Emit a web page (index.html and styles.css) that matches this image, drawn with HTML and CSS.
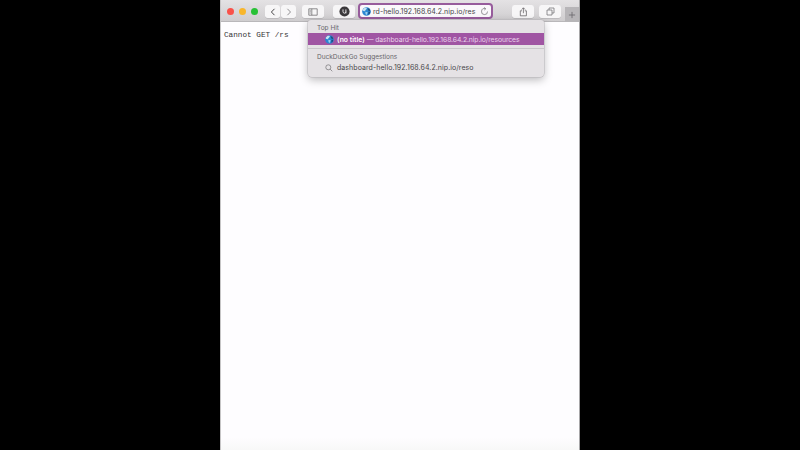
FILE: index.html
```html
<!DOCTYPE html>
<html lang="en">
<head>
<meta charset="utf-8">
<title>Browser</title>
<link rel="stylesheet" href="styles.css">
</head>
<body>
<svg class="defs" aria-hidden="true">
  <symbol id="globe" viewBox="0 0 10 10">
    <circle cx="5" cy="5" r="4.8" fill="#2b86d2"/>
    <path d="M1.2 2.4 3 .8 5 .8 5.4 2 4 3.2 3.2 4.6 1.6 4.4 .7 3.7Z" fill="#c5e3ef"/>
    <path d="M3.7 5.2 6.3 5.7 5.7 7.7 4.7 9.1 3.9 7.2Z" fill="#9bd3ee"/>
    <path d="M6.2 1.2 8.3 2.2 9.2 4.1 7.8 4.4 6.6 3.2Z" fill="#204f78"/>
    <path d="M7.2 5.3 9.3 5.2 8.4 7.7 7 8.5Z" fill="#194b80"/>
  </symbol>
</svg>
<main class="window">
  <header class="toolbar">
    <div class="lights"><i class="red"></i><i class="yellow"></i><i class="green"></i></div>
    <div class="nav">
      <button class="btn" aria-label="Back"><svg width="8" height="10" viewBox="0 0 8 10"><path d="M5.5 1.8 2.4 5l3.1 3.2" stroke="#484648" stroke-width="1"/></svg></button>
      <button class="btn" aria-label="Forward"><svg width="8" height="10" viewBox="0 0 8 10"><path d="M2.4 1.8 5.5 5 2.4 8.2" stroke="#858386" stroke-width=".9"/></svg></button>
    </div>
    <button class="btn sidebar" aria-label="Sidebar"><svg width="10" height="8" viewBox="0 0 10 8"><path d="M.8.8h8.4v6.4H.8zM3.8.8v6.4M1.7 2.3h1M1.7 3.7h1M1.7 5.1h1" stroke="#626063" stroke-width=".7"/></svg></button>
    <button class="btn shield" aria-label="Extension"><svg width="11" height="11" viewBox="0 0 11 11"><circle cx="5.5" cy="5.5" r="5.1" fill="#3b393b"/><path d="M4 3.4v2.3c0 2 2.9 2 2.9 0V3.4M6.9 5.6v1.8" stroke="#e4e2e4" stroke-width="1"/></svg></button>
    <div class="address">
      <svg class="globe"><use href="#globe"/></svg>
      <span class="url">rd-hello.192.168.64.2.nip.io/res</span>
      <svg class="reload" viewBox="0 0 9 9"><path d="M5.3 1.7A3 3 0 1 0 7.5 4.5M4.2.4l1.6 1.4-1.5 1.3" stroke="#777579" stroke-width=".75"/></svg>
    </div>
    <button class="btn share" aria-label="Share"><svg width="9" height="10" viewBox="0 0 9 10"><path d="M3 3.8H1.3v5h6.1v-5H5.8M4.4 6.2V.9M2.7 2.5 4.4.8l1.7 1.7" stroke="#615f62" stroke-width=".75"/></svg></button>
    <button class="btn tabs" aria-label="Tabs"><svg width="9" height="9" viewBox="0 0 9 9"><path d="M3 3V1h5v5H6M1 3h5v5H1z" stroke="#727073" stroke-width=".75"/></svg></button>
    <button class="new-tab" aria-label="New tab"><svg width="8" height="8" viewBox="0 0 8 8"><path d="M4 .9v6.2M.9 4h6.2" stroke="#68666a" stroke-width=".8"/></svg></button>
  </header>
  <pre class="response">Cannot GET /rs</pre>
  <section class="suggestions">
    <h2>Top Hit</h2>
    <div class="row selected">
      <svg class="globe"><use href="#globe"/></svg>
      <span class="hit"><b>(no title)</b> — dashboard-hello.192.168.64.2.nip.io/resources</span>
    </div>
    <hr>
    <h2>DuckDuckGo Suggestions</h2>
    <div class="row">
      <svg class="search" viewBox="0 0 8 8"><circle cx="3.3" cy="3.3" r="2.5" stroke="#737174" stroke-width=".7"/><path d="m5.1 5.1 2.2 2.2" stroke="#737174" stroke-width=".7"/></svg>
      <span class="query">dashboard-hello.192.168.64.2.nip.io/reso</span>
    </div>
  </section>
</main>
</body>
</html>
```

FILE: styles.css
```css
* { box-sizing: border-box; }
body { margin: 0; height: 450px; overflow: hidden; background: #000; font-family: Inter, "Liberation Sans", sans-serif; }
svg { display: block; flex: none; fill: none; }
.defs { position: absolute; width: 0; height: 0; }
.window { position: relative; width: 360px; height: 450px; margin: 0 auto; background: linear-gradient(#fefdff 437px, #f8f8f8); border-left: 1px solid #c6c5c6; border-right: 1px solid #a7a6a8; }
.toolbar { display: flex; align-items: flex-start; height: 22px; padding: 5px 0 0 6px; background: linear-gradient(#e4e2e4, #cfcdcf); border-bottom: 1px solid #b9b7ba; }
.lights { display: flex; gap: 5px; padding-top: 3px; margin-right: 7px; }
.lights i { width: 7px; height: 7px; border-radius: 50%; }
.red { background: #f95149; }
.yellow { background: #f8b62b; }
.green { background: #27c135; }
.nav { display: flex; gap: 1px; margin-right: 6px; }
button { border: 0; padding: 0; display: flex; align-items: center; justify-content: center; flex: none; }
.btn { width: 22px; height: 13px; border-radius: 2.5px; background: #f7f6f7; box-shadow: 0 .5px .5px #aaa8ab; }
.nav .btn { width: 15px; }
.shield { margin: 0 3px 0 9px; }
.address { display: flex; align-items: center; width: 135px; height: 16px; margin-top: -2px; padding: 0 2px; border: 2px solid #975c9c; border-radius: 4px; background: #faf8fb; }
.globe { width: 9px; height: 9px; }
.url { width: 103px; margin-left: 2px; white-space: nowrap; color: #464447; font-size: 7px; line-height: 11px; letter-spacing: .04px; }
.reload { width: 9px; height: 9px; margin-left: 4px; }
.share { margin-left: 19px; }
.tabs { margin-left: 5px; }
.new-tab { width: 14px; height: 15px; margin: 2px 0 0 auto; background: #b7b5b8; }
.response { margin: 8px 0 0 3px; color: #363436; font: 7.7px/10px "Liberation Mono", monospace; }
.suggestions { position: absolute; left: 87px; top: 20px; width: 236px; height: 57px; padding-top: 4px; border-radius: 3px 3px 4px 4px; background: #e5e2e5; box-shadow: 0 0 0 .5px #b8b5b9, 0 3px 8px #0004; }
h2 { margin: 0 0 0 9px; color: #68666a; font-weight: 400; font-size: 6.5px; line-height: 9px; white-space: nowrap; }
.row { display: flex; align-items: center; height: 12px; padding-left: 17px; white-space: nowrap; font-size: 7px; color: #49474a; }
.selected { color: #e9d2eb; background: radial-gradient(circle, #bc75bf 0 .5px, transparent .7px) 0 0 / 4px 4px, #a055a3; }
.selected b { color: #fff; font-weight: 600; }
.hit { margin-left: 3px; font-size: 6.8px; letter-spacing: -.08px; }
.hit b { letter-spacing: .04px; }
hr { height: 1px; margin: 3px 0 4px; border: 0; background: #c9c6ca; }
h2 + .row:last-child { height: 11px; }
.search { width: 8px; height: 8px; }
.query { margin-left: 4px; letter-spacing: .07px; }
```
